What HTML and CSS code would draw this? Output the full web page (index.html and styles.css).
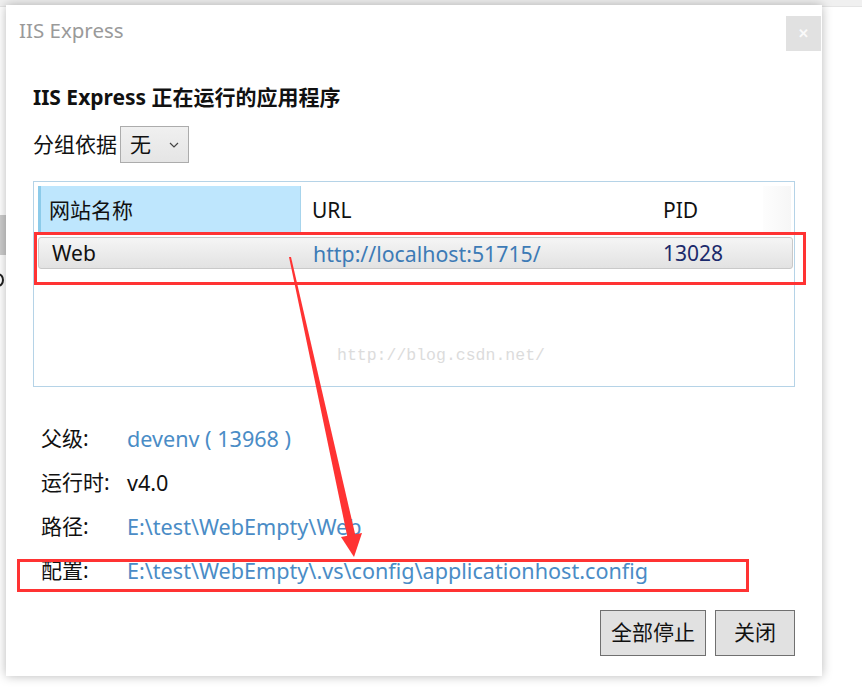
FILE: index.html
```html
<!DOCTYPE html>
<html>
<head>
<meta charset="utf-8">
<title>IIS Express</title>
<link rel="stylesheet" href="styles.css">
</head>
<body>

<div class="bk">
    <div class="bk-top"></div>
    <div class="bk-blk"></div>
    <div class="bk-o"></div>
</div>

<div class="dlg">
    <div class="tbar">
        <span class="ttl">IIS Express</span>
        <span class="cls">&#x2715;</span>
    </div>

    <div class="body">
        <h2 class="hd">IIS Express 正在运行的应用程序</h2>

        <div class="grp">
            <span>分组依据</span>
            <div class="sel">无 <i class="chev"><svg width="10" height="6" viewBox="0 0 10 6"><path d="M1 1l4 4 4-4" fill="none" stroke="#444" stroke-width="1.2"/></svg></i></div>
        </div>

        <div class="tbl">
            <div class="thead">
                <div class="th th-on">网站名称</div>
                <div class="th th-url">URL</div>
                <div class="th th-pid">PID</div>
                <div class="th-sb"></div>
            </div>
            <div class="tr">
                <div class="td td-name">Web</div>
                <div class="td td-url">http://localhost:51715/</div>
                <div class="td td-pid">13028</div>
            </div>
            <p class="wm">http://blog.csdn.net/</p>
        </div>

        <ul class="info">
            <li><span class="lb">父级:</span><span class="lnk">devenv ( 13968 )</span></li>
            <li><span class="lb">运行时:</span><span class="val">v4.0</span></li>
            <li><span class="lb">路径:</span><span class="lnk">E:\test\WebEmpty\Web</span></li>
            <li><span class="lb">配置:</span><span class="lnk">E:\test\WebEmpty\.vs\config\applicationhost.config</span></li>
        </ul>

        <div class="btns">
            <span class="btn">全部停止</span>
            <span class="btn btn-s">关闭</span>
        </div>
    </div>
</div>

<!-- 标注 -->
<div class="mark mark1"></div>
<div class="mark mark2"></div>
<svg class="arrow" width="862" height="688" viewBox="0 0 862 688">
    <polygon points="289,257 291,257 356,538 348,540" fill="#f33"/>
    <polygon points="341,537 362,533 354,557" fill="#f33"/>
</svg>

</body>
</html>
```

FILE: styles.css
```css
body,h2,p,ul,li{margin:0;padding:0;}
li{list-style:none;}
body{background:#fff;font:21px/1.3 "Noto Sans","Noto Sans CJK SC",sans-serif;color:#111;width:862px;height:688px;overflow:hidden;position:relative;}

.bk-top{position:absolute;left:0;top:0;width:862px;height:6px;background:#f0f0f0;border-bottom:1px solid #e4e4e4;}
.bk-blk{position:absolute;left:0;top:215px;width:6px;height:40px;background:#ccc;}
.bk-o{position:absolute;left:-8px;top:273px;width:8px;height:10px;border:2px solid #222;border-radius:50%;}

.dlg{position:relative;margin:5px 0 0 6px;width:816px;height:671px;background:#fff;box-shadow:0 0 10px rgba(0,0,0,.28);display:flex;flex-direction:column;}
.tbar{display:flex;justify-content:space-between;align-items:flex-start;padding:10px 1px 0 13px;height:52px;box-sizing:border-box;}
.ttl{font:20.5px/1 "Noto Sans",sans-serif;color:#9a9a9a;margin-top:5px;}
.cls{width:35px;height:35px;margin-top:1px;background:#e1e1e1;color:#fafafa;font-size:13px;font-weight:bold;display:flex;align-items:center;justify-content:center;}

.body{padding:0 0 0 27px;display:flex;flex-direction:column;}
.hd{font-size:21px;font-weight:bold;margin-top:27px;line-height:26px;}
.grp{display:flex;align-items:center;gap:3px;margin-top:16px;}
.sel{width:69px;height:37px;box-sizing:border-box;border:1px solid #acacac;background:linear-gradient(#f0f0f0,#e5e5e5);display:flex;align-items:center;padding-left:9px;gap:18px;}
.chev{display:flex;}

.tbl{position:relative;margin-top:18px;width:762px;height:206px;box-sizing:border-box;border:1px solid #b5d3e7;padding:4px 3px 0 4px;}
.thead{display:flex;height:48px;}
.th{display:flex;align-items:center;box-sizing:border-box;padding-top:2px;}
.th-on{width:263px;background:#bee6fd;border-left:3px solid #8ccbea;border-right:1px solid #a7d4ec;padding-left:8px;}
.th-url{width:350px;padding-left:11px;}
.th-pid{width:112px;padding-left:12px;}
.th-sb{flex:1;background:linear-gradient(90deg,#fdfdfd,#f6f6f6);}
.tr{display:flex;align-items:center;margin:3px 0 0 0;width:755px;height:32px;box-sizing:border-box;padding-top:2px;border:1px solid #c9c9c9;border-radius:3px;background:linear-gradient(#f5f5f5,#e2e2e2);}
.td-name{width:262px;padding-left:13px;box-sizing:border-box;}
.td-url{width:350px;padding-left:12px;box-sizing:border-box;color:#3d7bb6;font-size:21.3px;}
.td-pid{padding-left:12px;color:#1b2a6b;}
.wm{position:absolute;left:303px;top:166px;font:16.5px/1 "Liberation Mono",monospace;color:#dcdcdc;}

.info{margin-top:30px;}
.info li{display:flex;height:44px;align-items:center;}
.lb{width:94px;padding-left:8px;box-sizing:border-box;}
.lnk,.val{font-size:21.6px;}
.lnk{color:#4a8cc6;}

.btns{display:flex;justify-content:flex-end;gap:9px;margin:17px 27px 0 0;}
.btn{height:46px;box-sizing:border-box;border:1px solid #707070;background:#e1e1e1;display:flex;align-items:center;justify-content:center;padding:0 10px;}
.btn-s{width:80px;}

.mark{position:absolute;border:3px solid #f33;box-sizing:border-box;}
.mark1{left:34px;top:232px;width:772px;height:53px;}
.mark2{left:17px;top:559px;width:732px;height:33px;}
.arrow{position:absolute;left:0;top:0;}
```
